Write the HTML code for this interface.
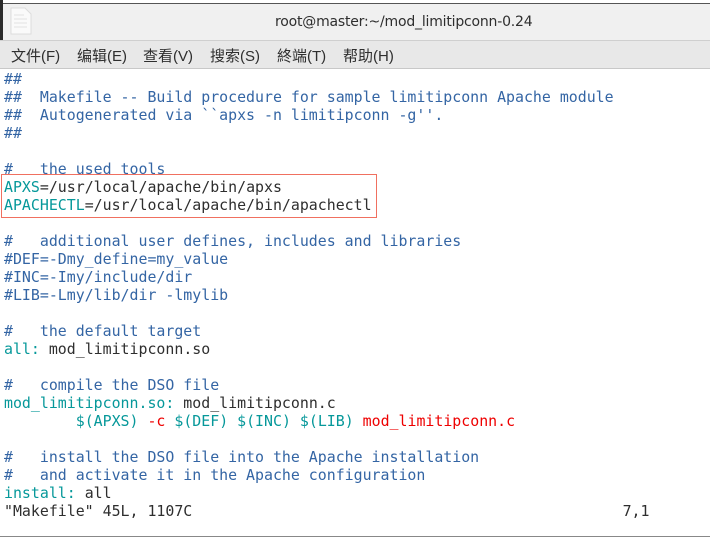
<!DOCTYPE html>
<html><head><meta charset="utf-8"><style>
body{margin:0;width:710px;height:540px;overflow:hidden;background:#fff;position:relative;font-family:"Liberation Sans","Noto Sans CJK SC",sans-serif}
#top{position:absolute;left:0;top:0;width:710px;height:3px;background:#fff;border-bottom:1px solid #555}
#title{position:absolute;left:0;top:4px;width:710px;height:36px;background:#f0f0f0;border-bottom:1px solid #cfcfcf}
#ls{position:absolute;left:0;top:0;width:3px;height:40px;background:#2a2a2a}
#title .t{position:absolute;left:275px;top:10px;font-size:14px;font-weight:normal;color:#2e2e2e;font-family:"DejaVu Sans",sans-serif;letter-spacing:-0.2px}
#menu{position:absolute;left:0;top:41px;width:710px;height:27px;background:#e8e8e8;border-bottom:1px solid #c8c8c8;font-size:15px;color:#2e2e2e}
#menu span{position:absolute;top:4px}
#ed{position:absolute;left:4px;top:70px;font-family:"DejaVu Sans Mono",monospace;font-size:14.9px;line-height:18px;white-space:pre;color:#2e2e2e}
.c{color:#3465a4}.g{color:#06989a}.r{color:#e00}
#box{position:absolute;left:1px;top:174px;width:374px;height:42px;border:1.5px solid #f07060}
#bot{position:absolute;left:0;top:536px;width:710px;height:4px;border-top:1px solid #888;background:#fff}
</style></head><body>
<div id="top"></div>
<div id="title"><svg style="position:absolute;left:10px;top:3px" width="22" height="28"><path d="M1 1h14l6 6v20H1z" fill="#fafafa" stroke="#ddd"/><path d="M4 8h10M4 12h13M4 16h13M4 20h13" stroke="#e2e2e2"/></svg><div class="t">root@master:~/mod_limitipconn-0.24</div></div>
<div id="ls"></div>
<div id="menu"><span style="left:11px">文件(F)</span><span style="left:77px">编辑(E)</span><span style="left:143px">查看(V)</span><span style="left:210px">搜索(S)</span><span style="left:277px">終端(T)</span><span style="left:343px">帮助(H)</span></div>
<div id="box"></div>
<div id="ed"><span class="c">##
##  Makefile -- Build procedure for sample limitipconn Apache module
##  Autogenerated via ``apxs -n limitipconn -g''.
##

#   the used tools</span>
<span class="g">APXS</span>=/usr/local/apache/bin/apxs
<span class="g">APACHECTL</span>=/usr/local/apache/bin/apachectl

<span class="c">#   additional user defines, includes and libraries
#DEF=-Dmy_define=my_value
#INC=-Imy/include/dir
#LIB=-Lmy/lib/dir -lmylib

#   the default target</span>
<span class="g">all:</span> mod_limitipconn.so

<span class="c">#   compile the DSO file</span>
<span class="g">mod_limitipconn.so:</span> mod_limitipconn.c
        <span class="g">$(APXS)</span> <span class="r">-c</span> <span class="g">$(DEF) $(INC) $(LIB)</span> <span class="r">mod_limitipconn.c</span>

<span class="c">#   install the DSO file into the Apache installation
#   and activate it in the Apache configuration</span>
<span class="g">install:</span> all
"Makefile" 45L, 1107C                                                7,1</div>
<div id="bot"></div>
</body></html>
